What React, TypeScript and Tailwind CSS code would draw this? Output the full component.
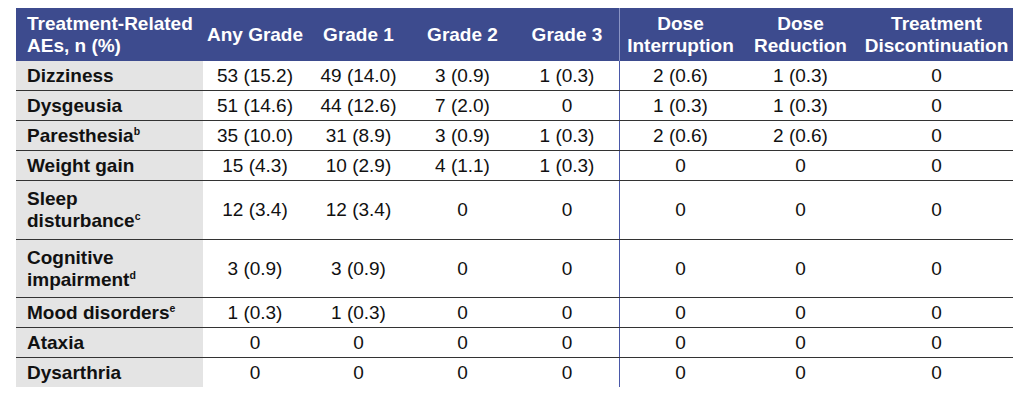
import React from "react";

type Row = { label: React.ReactNode; vals: string[]; h: string };

const sup = (s: string) => (
  <sup className="text-[10.5px] font-bold relative top-[-7px] align-baseline">{s}</sup>
);

const rows: Row[] = [
  { label: "Dizziness", vals: ["53 (15.2)", "49 (14.0)", "3 (0.9)", "1 (0.3)", "2 (0.6)", "1 (0.3)", "0"], h: "h-[29px]" },
  { label: "Dysgeusia", vals: ["51 (14.6)", "44 (12.6)", "7 (2.0)", "0", "1 (0.3)", "1 (0.3)", "0"], h: "h-[30px]" },
  { label: <>Paresthesia{sup("b")}</>, vals: ["35 (10.0)", "31 (8.9)", "3 (0.9)", "1 (0.3)", "2 (0.6)", "2 (0.6)", "0"], h: "h-[30px]" },
  { label: "Weight gain", vals: ["15 (4.3)", "10 (2.9)", "4 (1.1)", "1 (0.3)", "0", "0", "0"], h: "h-[30px]" },
  { label: <>Sleep<br />disturbance{sup("c")}</>, vals: ["12 (3.4)", "12 (3.4)", "0", "0", "0", "0", "0"], h: "h-[59px]" },
  { label: <>Cognitive<br />impairment{sup("d")}</>, vals: ["3 (0.9)", "3 (0.9)", "0", "0", "0", "0", "0"], h: "h-[58px]" },
  { label: <>Mood disorders{sup("e")}</>, vals: ["1 (0.3)", "1 (0.3)", "0", "0", "0", "0", "0"], h: "h-[30px]" },
  { label: "Ataxia", vals: ["0", "0", "0", "0", "0", "0", "0"], h: "h-[30px]" },
  { label: "Dysarthria", vals: ["0", "0", "0", "0", "0", "0", "0"], h: "h-[30px]" },
];

const widths = ["w-[187px]", "w-[104px]", "w-[103px]", "w-[105px]", "w-[104px]", "w-[122px]", "w-[119px]", "w-[153px]"];

export default function App() {
  return (
    <div
      className="w-[1024px] h-[408px] bg-white pt-[8px] pl-[16px]"
      style={{ fontFamily: '"Liberation Sans", Arial, sans-serif' }}
    >
      <div className="w-[997px] flex flex-col">
        {/* header */}
        <div className="flex h-[53px] bg-[#3d4b8e] text-white font-bold text-[19px] leading-[22px]">
          <div className={`${widths[0]} flex items-center pl-[11px] whitespace-nowrap`}>
            Treatment-Related
            <br />
            AEs, n (%)
          </div>
          <div className={`${widths[1]} flex items-center justify-center text-center whitespace-nowrap`}>Any Grade</div>
          <div className={`${widths[2]} flex items-center justify-center text-center`}>Grade 1</div>
          <div className={`${widths[3]} flex items-center justify-center text-center`}>Grade 2</div>
          <div className={`${widths[4]} flex items-center justify-center text-center`}>Grade 3</div>
          <div className={`${widths[5]} flex items-center justify-center text-center border-l border-[#8a94c4]`}>
            Dose
            <br />
            Interruption
          </div>
          <div className={`${widths[6]} flex items-center justify-center text-center`}>
            Dose
            <br />
            Reduction
          </div>
          <div className={`${widths[7]} flex items-center justify-center text-center whitespace-nowrap`}>
            Treatment
            <br />
            Discontinuation
          </div>
        </div>
        {rows.map((r, i) => (
          <div
            key={i}
            className={`flex ${r.h} text-[19px] leading-[22px] text-[#111] ${i > 0 ? "border-t-[1.5px] border-[#333]" : ""}`}
          >
            <div className={`${widths[0]} bg-[#e4e4e4] flex items-center pl-[11px] font-bold whitespace-nowrap`}>
              <div>{r.label}</div>
            </div>
            {r.vals.map((v, j) => (
              <div
                key={j}
                className={`${widths[j + 1]} flex items-center justify-center whitespace-nowrap ${j === 4 ? "border-l-[1.5px] border-[#4a58a8]" : ""}`}
              >
                {v}
              </div>
            ))}
          </div>
        ))}
      </div>
    </div>
  );
}
